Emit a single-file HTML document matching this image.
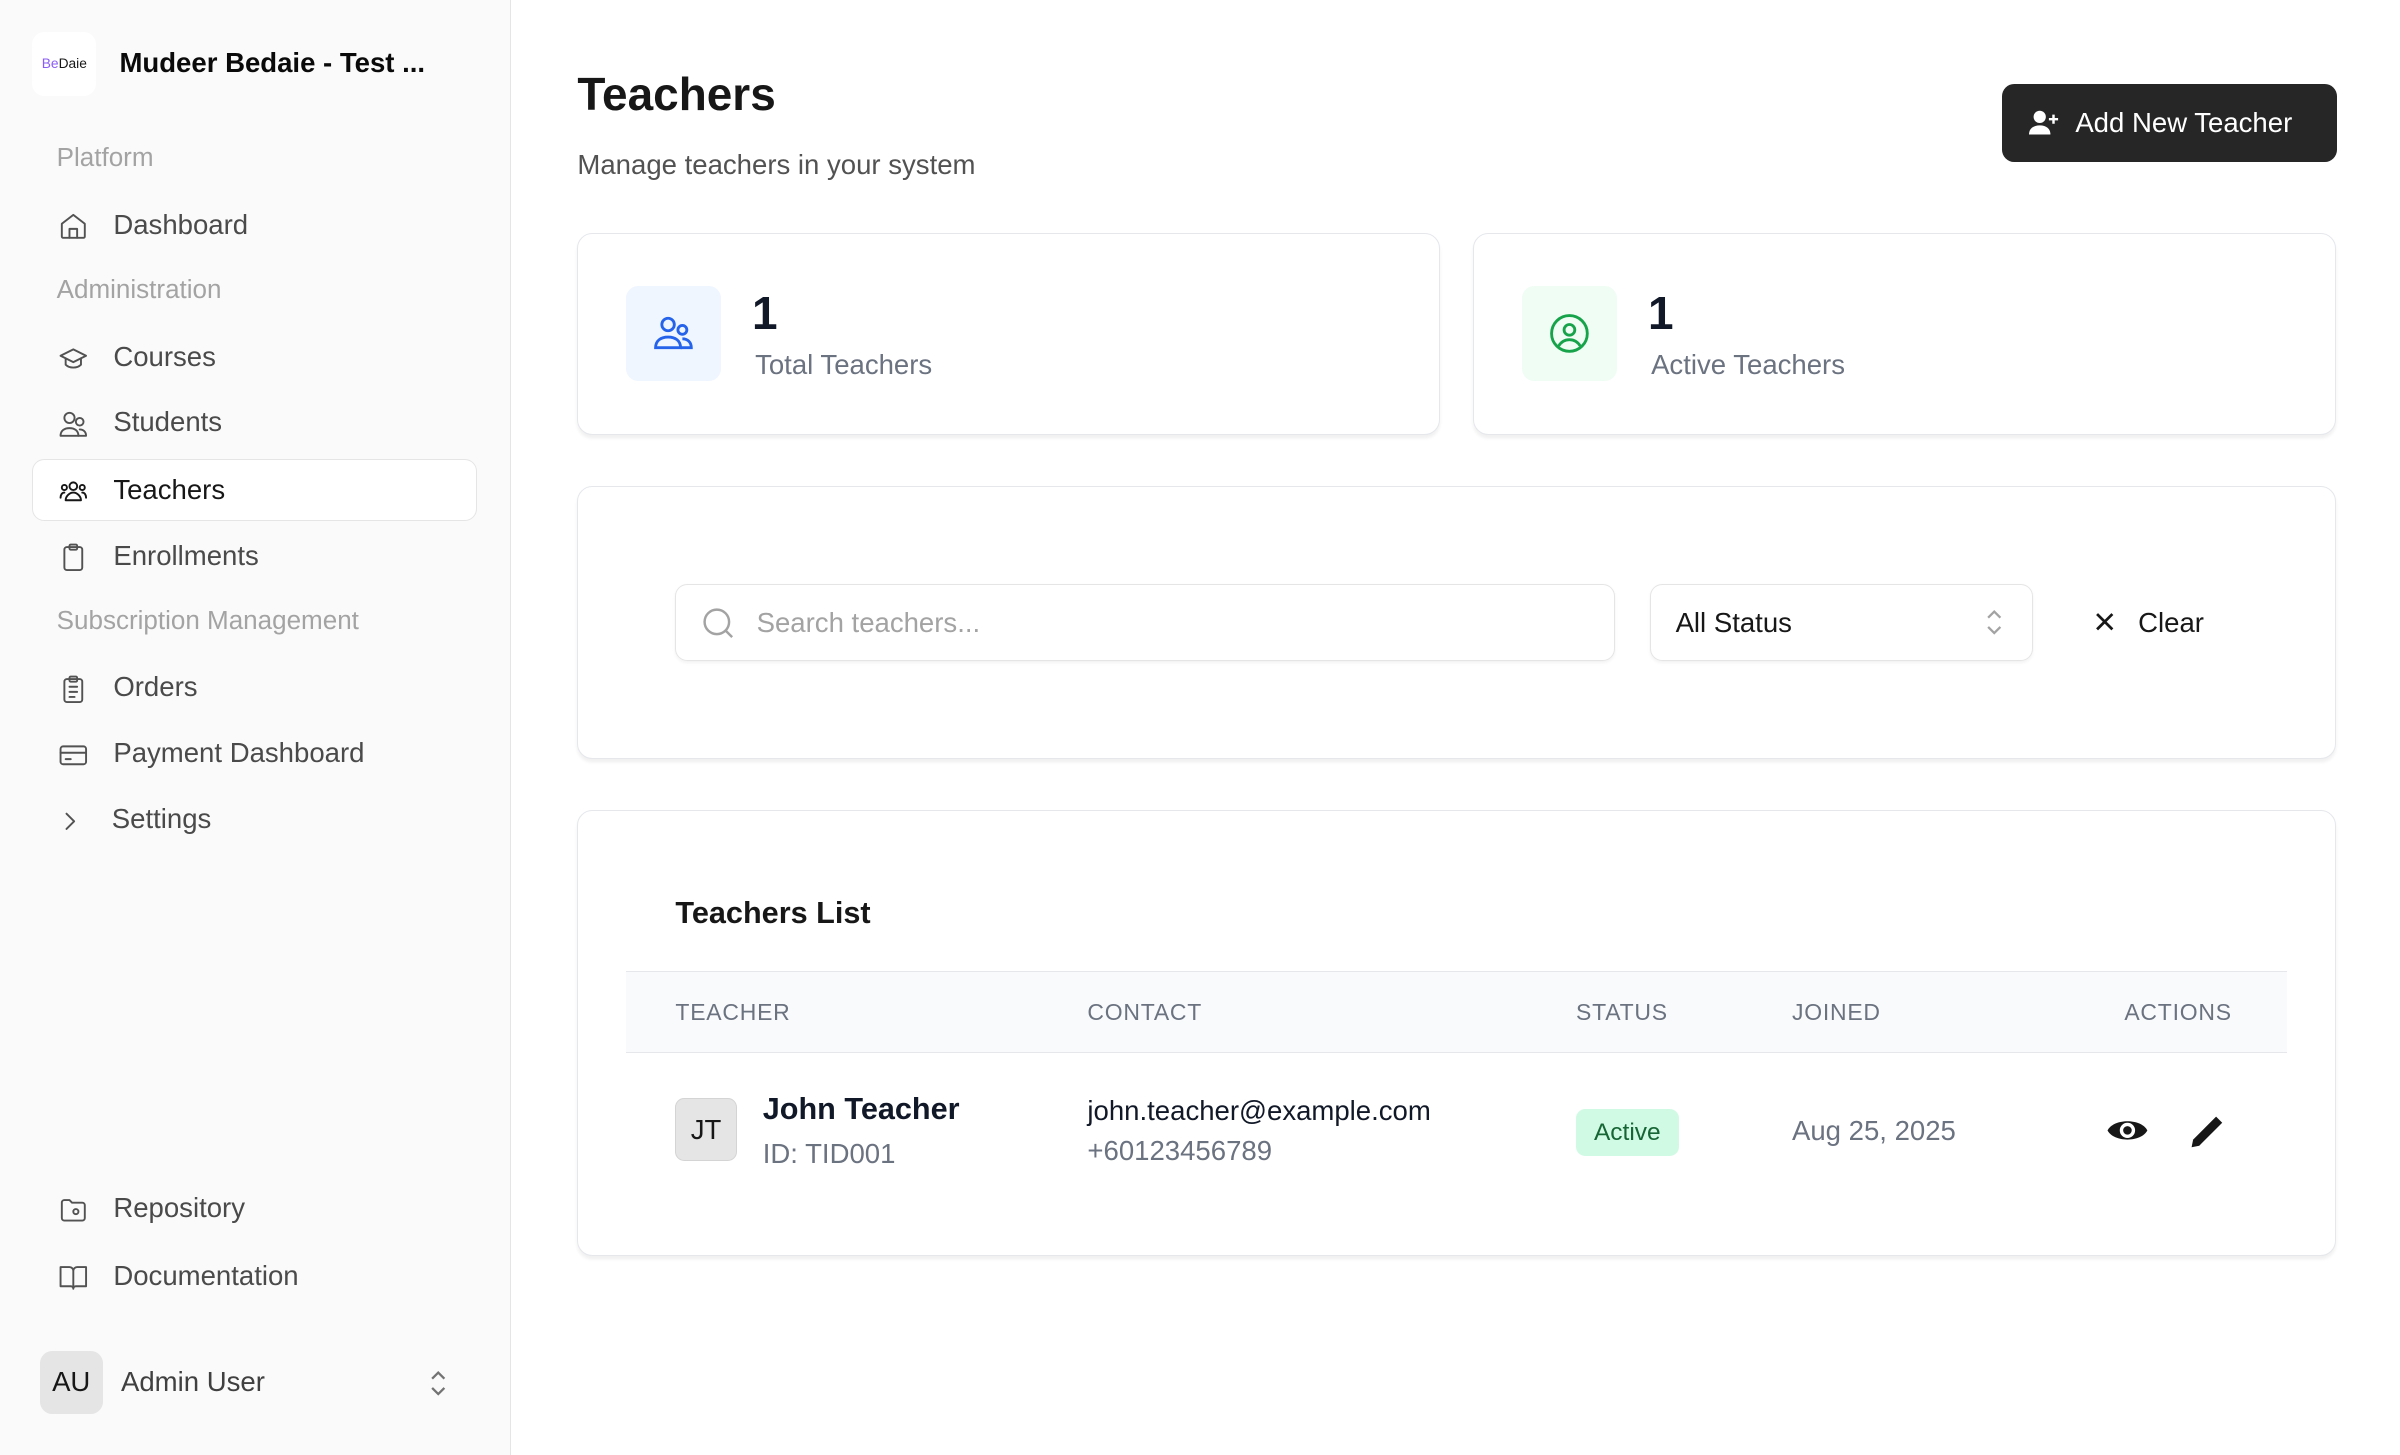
<!DOCTYPE html>
<html><head><meta charset="utf-8"><style>
html,body{margin:0;padding:0;background:#fff;}
body{width:1567px;height:950px;zoom:1.5316;position:relative;overflow:hidden;font-family:"Liberation Sans",sans-serif;color:#171717;}
.a{position:absolute;}
.side{left:0;top:0;width:333px;height:950px;background:#fafafa;border-right:1px solid #e5e5e5;}
.grp{left:37px;font-size:17px;color:#a3a3a3;line-height:20px;}
.nav{left:74px;font-size:18px;color:#4a4a4a;line-height:20px;}
.ic{left:38px;width:20px;height:20px;}
.ic svg{width:20px;height:20px;fill:none;stroke:#525252;stroke-width:1.5;stroke-linecap:round;stroke-linejoin:round;}
.card{background:#fff;border:1px solid #e5e7eb;border-radius:10px;box-shadow:0 2px 2px rgba(0,0,0,.06);}
.th{font-size:15px;color:#6b7280;letter-spacing:.5px;top:652px;line-height:18px;}
</style></head><body>
<div class="a side"></div>
<div class="a" style="left:21px;top:21px;width:42px;height:42px;background:#fff;border-radius:8px;font-size:9px;line-height:42px;text-align:center;"><span style="color:#8b5cf6">Be</span>Daie</div>
<div class="a" style="left:78px;top:30px;font-size:18px;font-weight:bold;line-height:22px;color:#0a0a0a">Mudeer Bedaie - Test ...</div>

<div class="a grp" style="top:93px">Platform</div>
<div class="a ic" style="top:138px"><svg viewBox="0 0 24 24"><path d="M3 10l9-7 9 7v10a1 1 0 0 1-1 1H4a1 1 0 0 1-1-1z"/><path d="M9 21v-7h6v7"/></svg></div>
<div class="a nav" style="top:137px">Dashboard</div>
<div class="a grp" style="top:179px">Administration</div>
<div class="a ic" style="top:224px"><svg viewBox="0 0 24 24"><path d="M22 10L12 5 2 10l10 5 10-5z"/><path d="M6 12v5c3 3 9 3 12 0v-5"/></svg></div>
<div class="a nav" style="top:223px">Courses</div>
<div class="a ic" style="top:267px"><svg viewBox="0 0 24 24"><circle cx="9" cy="7" r="4"/><path d="M2 21c0-4 3-6 7-6s7 2 7 6z"/><circle cx="17" cy="10" r="3"/><path d="M16 21h6c0-3-2-5-5-5"/></svg></div>
<div class="a nav" style="top:266px">Students</div>
<div class="a" style="left:21px;top:300px;width:289px;height:39px;background:#fff;border:1px solid #e5e5e5;border-radius:8px"></div>
<div class="a ic" style="top:311px"><svg viewBox="0 0 24 24" style="stroke:#171717"><circle cx="12" cy="8" r="3"/><circle cx="5" cy="9" r="2"/><circle cx="19" cy="9" r="2"/><path d="M6 19c0-3 3-6 6-6s6 3 6 6z"/><path d="M2 17c0-2 1-4 3-4M22 17c0-2-1-4-3-4"/></svg></div>
<div class="a nav" style="top:310px;color:#171717">Teachers</div>
<div class="a ic" style="top:354px"><svg viewBox="0 0 24 24"><rect x="5" y="4" width="14" height="18" rx="2"/><rect x="9" y="2" width="6" height="4" rx="1"/></svg></div>
<div class="a nav" style="top:353px">Enrollments</div>
<div class="a grp" style="top:395px">Subscription Management</div>
<div class="a ic" style="top:440px"><svg viewBox="0 0 24 24"><rect x="5" y="4" width="14" height="18" rx="2"/><path d="M9 10h6M9 14h6M9 18h4"/><rect x="9" y="2" width="6" height="4" rx="1"/></svg></div>
<div class="a nav" style="top:439px">Orders</div>
<div class="a ic" style="top:483px"><svg viewBox="0 0 24 24"><rect x="2" y="5" width="20" height="14" rx="2"/><path d="M2 10h20M6 15h4"/></svg></div>
<div class="a nav" style="top:482px">Payment Dashboard</div>
<div class="a ic" style="top:526px;left:36px"><svg viewBox="0 0 24 24"><path d="M9 6l6 6-6 6"/></svg></div>
<div class="a nav" style="top:525px;left:73px">Settings</div>
<div class="a ic" style="top:780px"><svg viewBox="0 0 24 24"><path d="M3 6a2 2 0 0 1 2-2h4l2 2h8a2 2 0 0 1 2 2v10a2 2 0 0 1-2 2H5a2 2 0 0 1-2-2z"/><circle cx="14" cy="13" r="2"/></svg></div>
<div class="a nav" style="top:779px">Repository</div>
<div class="a ic" style="top:824px"><svg viewBox="0 0 24 24"><path d="M2 4h7a3 3 0 0 1 3 3v14a2 2 0 0 0-2-2H2zM22 4h-7a3 3 0 0 0-3 3v14a2 2 0 0 1 2-2h8z"/></svg></div>
<div class="a nav" style="top:823px">Documentation</div>
<div class="a" style="left:26px;top:882px;width:41px;height:41px;background:#e5e5e5;border-radius:8px;font-size:18px;line-height:41px;text-align:center;color:#171717">AU</div>
<div class="a" style="left:79px;top:892px;font-size:18px;color:#404040">Admin User</div>
<div class="a" style="left:278px;top:893px;"><svg width="16" height="20" viewBox="0 0 16 20" fill="none" stroke="#737373" stroke-width="1.5"><path d="M4 7l4-4 4 4M4 13l4 4 4-4"/></svg></div>

<div class="a" style="left:377px;top:44px;font-size:30px;font-weight:bold;color:#171717;line-height:36px">Teachers</div>
<div class="a" style="left:377px;top:97px;font-size:18px;color:#525252">Manage teachers in your system</div>
<div class="a" style="left:1307px;top:55px;width:219px;height:51px;background:#262626;border-radius:8px;color:#fff;font-size:18px;line-height:51px">
<svg class="a" style="left:18px;top:17px" width="20" height="17" viewBox="0 0 20 17" fill="#fff"><circle cx="7" cy="4.5" r="4"/><path d="M0 16c0-4 3-6 7-6s7 2 7 6z"/><path d="M16 3v6M13 6h6" stroke="#fff" stroke-width="1.6"/></svg>
<span class="a" style="left:48px">Add New Teacher</span></div>

<div class="a card" style="left:377px;top:152px;width:562px;height:131px"></div>
<div class="a" style="left:409px;top:187px;width:62px;height:62px;background:#eff6ff;border-radius:8px"><svg style="margin:17px" width="28" height="28" viewBox="0 0 24 24" fill="none" stroke="#2563eb" stroke-width="1.6"><circle cx="9" cy="7" r="3.5"/><path d="M2 20c0-4 3-6 7-6s7 2 7 6z"/><circle cx="17" cy="10" r="2.5"/><path d="M16 20h6c0-3-2-5-5-5"/></svg></div>
<div class="a" style="left:491px;top:187px;font-size:30px;font-weight:bold;color:#111827">1</div>
<div class="a" style="left:493px;top:228px;font-size:18px;color:#6b7280">Total Teachers</div>
<div class="a card" style="left:962px;top:152px;width:562px;height:131px"></div>
<div class="a" style="left:994px;top:187px;width:62px;height:62px;background:#f0fdf4;border-radius:8px"><svg style="margin:17px" width="28" height="28" viewBox="0 0 24 24" fill="none" stroke="#16a34a" stroke-width="1.6"><circle cx="12" cy="12" r="10"/><circle cx="12" cy="10" r="3"/><path d="M6 19c1.5-2.5 3.5-3.5 6-3.5s4.5 1 6 3.5"/></svg></div>
<div class="a" style="left:1076px;top:187px;font-size:30px;font-weight:bold;color:#111827">1</div>
<div class="a" style="left:1078px;top:228px;font-size:18px;color:#6b7280">Active Teachers</div>

<div class="a card" style="left:377px;top:317px;width:1147px;height:177px"></div>
<div class="a" style="left:441px;top:381px;width:612px;height:49px;border:1px solid #e5e5e5;border-radius:8px;box-shadow:0 1px 2px rgba(0,0,0,.05)"></div>
<svg class="a" style="left:457px;top:395px" width="24" height="24" viewBox="0 0 24 24" fill="none" stroke="#a3a3a3" stroke-width="1.6"><circle cx="11" cy="11" r="8"/><path d="M17 17l4 4"/></svg>
<div class="a" style="left:494px;top:396px;font-size:18px;color:#a3a3a3">Search teachers...</div>
<div class="a" style="left:1077px;top:381px;width:249px;height:49px;border:1px solid #e5e5e5;border-radius:8px;box-shadow:0 1px 2px rgba(0,0,0,.05)"></div>
<div class="a" style="left:1094px;top:396px;font-size:18px;color:#171717">All Status</div>
<svg class="a" style="left:1294px;top:396px" width="16" height="20" viewBox="0 0 16 20" fill="none" stroke="#a3a3a3" stroke-width="1.5"><path d="M4 7l4-4 4 4M4 13l4 4 4-4"/></svg>
<svg class="a" style="left:1367px;top:399px" width="14" height="14" viewBox="0 0 14 14" stroke="#171717" stroke-width="1.8"><path d="M2 2l10 10M12 2L2 12"/></svg>
<div class="a" style="left:1396px;top:396px;font-size:18px;color:#171717">Clear</div>

<div class="a card" style="left:377px;top:529px;width:1147px;height:290px"></div>
<div class="a" style="left:441px;top:585px;font-size:20px;color:#171717;font-weight:600">Teachers List</div>
<div class="a" style="left:409px;top:634px;width:1084px;height:52px;background:#f9fafb;border-top:1px solid #e5e7eb;border-bottom:1px solid #e5e7eb"></div>
<div class="a th" style="left:441px">TEACHER</div>
<div class="a th" style="left:710px">CONTACT</div>
<div class="a th" style="left:1029px">STATUS</div>
<div class="a th" style="left:1170px">JOINED</div>
<div class="a th" style="left:1387px">ACTIONS</div>
<div class="a" style="left:441px;top:717px;width:40px;height:41px;background:#e5e5e5;border:1px solid #d4d4d4;border-radius:6px;box-sizing:border-box;font-size:18px;line-height:40px;text-align:center">JT</div>
<div class="a" style="left:498px;top:713px;font-size:20px;font-weight:600;color:#111827">John Teacher</div>
<div class="a" style="left:498px;top:743px;font-size:18px;color:#6b7280">ID: TID001</div>
<div class="a" style="left:710px;top:715px;font-size:18px;color:#111827">john.teacher@example.com</div>
<div class="a" style="left:710px;top:741px;font-size:18px;color:#6b7280">+60123456789</div>
<div class="a" style="left:1029px;top:724px;width:67px;height:31px;background:#d1fae5;border-radius:6px;font-size:16px;color:#166534;line-height:31px;text-align:center">Active</div>
<div class="a" style="left:1170px;top:728px;font-size:18px;color:#6b7280">Aug 25, 2025</div>
<svg class="a" style="left:1375px;top:726px" width="28" height="24" viewBox="0 0 28 24"><path d="M1 12C5 4 23 4 27 12C23 20 5 20 1 12z" fill="#171717"/><circle cx="14" cy="12" r="5" fill="#fff"/><circle cx="14" cy="12" r="2.8" fill="#171717"/></svg>
<svg class="a" style="left:1428px;top:726px" width="26" height="26" viewBox="0 0 26 26"><path d="M19 3l4 4L8 22l-5 1 1-5z" fill="#171717"/></svg>
</body></html>
